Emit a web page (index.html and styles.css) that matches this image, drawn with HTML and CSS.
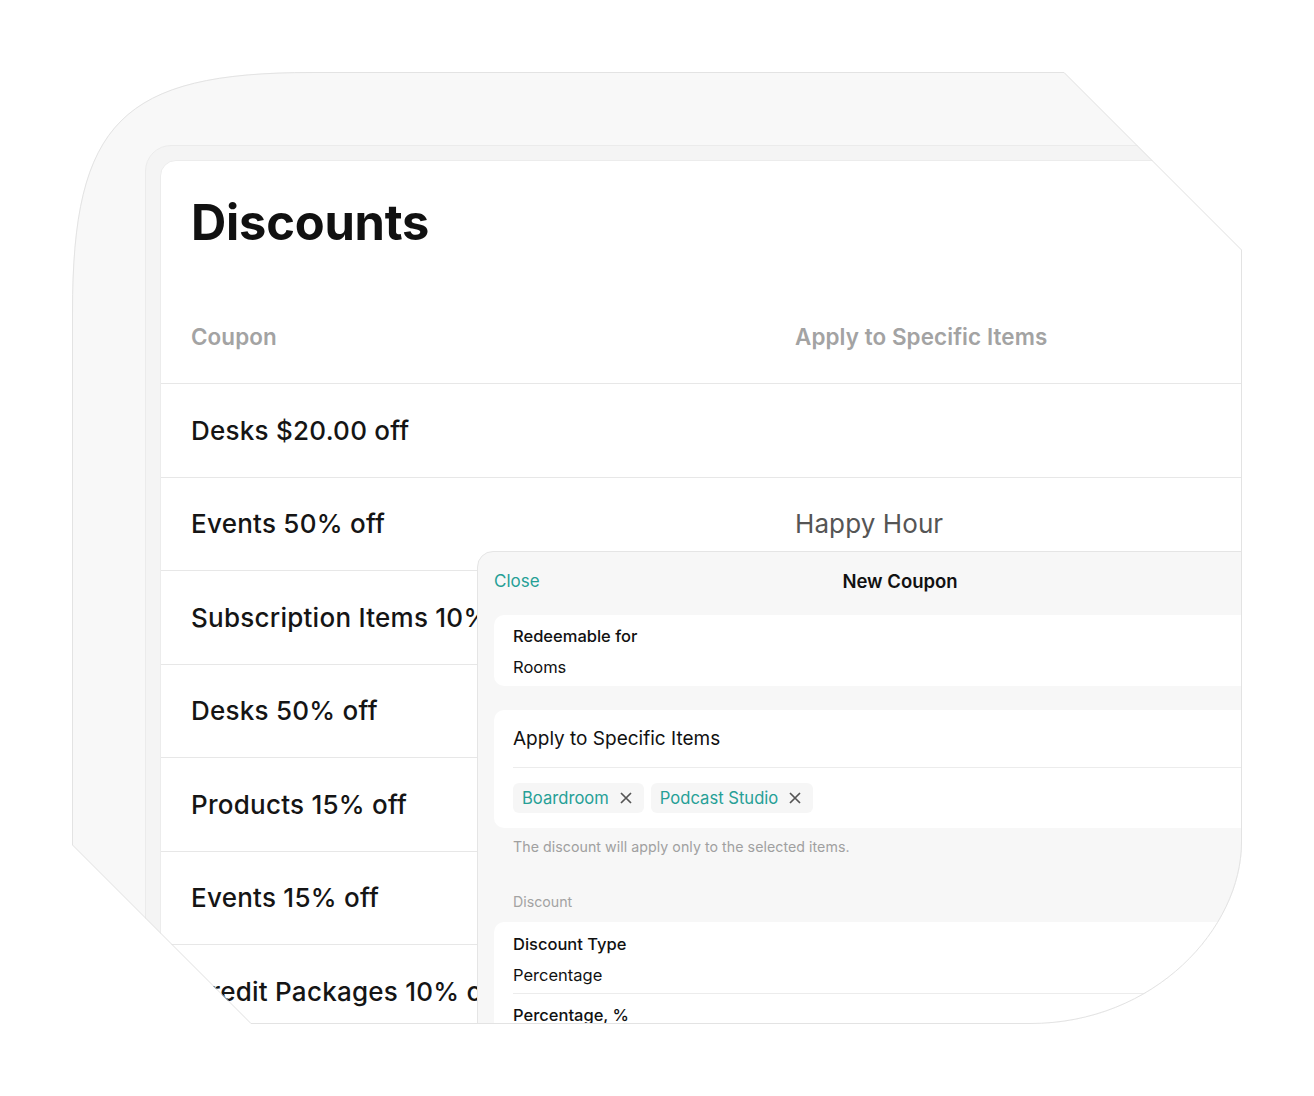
FILE: index.html
```html
<!DOCTYPE html>
<html lang="en">
<head>
<meta charset="utf-8">
<title>Discounts</title>
<link rel="stylesheet" href="styles.css">
</head>
<body>
<div class="stage">
  <div class="shape">
    <div class="device">
      <div class="screen">
        <h1 class="title">Discounts</h1>
        <div class="table">
          <div class="row head"><div class="c1">Coupon</div><div class="c2">Apply to Specific Items</div></div>
          <div class="row"><div class="c1">Desks $20.00 off</div><div class="c2"></div></div>
          <div class="row"><div class="c1">Events 50% off</div><div class="c2 muted">Happy Hour</div></div>
          <div class="row"><div class="c1">Subscription Items 10% off</div><div class="c2"></div></div>
          <div class="row"><div class="c1">Desks 50% off</div><div class="c2"></div></div>
          <div class="row"><div class="c1">Products 15% off</div><div class="c2"></div></div>
          <div class="row"><div class="c1">Events 15% off</div><div class="c2"></div></div>
          <div class="row"><div class="c1">Credit Packages 10% off</div><div class="c2"></div></div>
        </div>

        <div class="modal">
          <div class="modal-head">
            <span class="close">Close</span>
            <span class="modal-title">New Coupon</span>
            <span></span>
          </div>

          <div class="card">
            <div class="label">Redeemable for</div>
            <div class="value">Rooms</div>
          </div>

          <div class="card card-items">
            <div class="items-title">Apply to Specific Items</div>
            <div class="chips">
              <span class="chip">Boardroom
                <svg class="x" viewBox="0 0 12 12" width="12" height="12"><path d="M1 1L11 11M11 1L1 11"/></svg>
              </span>
              <span class="chip">Podcast Studio
                <svg class="x" viewBox="0 0 12 12" width="12" height="12"><path d="M1 1L11 11M11 1L1 11"/></svg>
              </span>
            </div>
          </div>
          <div class="hint">The discount will apply only to the selected items.</div>

          <div class="section">Discount</div>
          <div class="card card-discount">
            <div class="field">
              <div class="label">Discount Type</div>
              <div class="value">Percentage</div>
            </div>
            <div class="field field-2">
              <div class="label">Percentage, %</div>
            </div>
          </div>
        </div>
      </div>
    </div>
  </div>
  <svg class="outline" width="1170" height="952" viewBox="0 0 1170 952">
    <path d="M0.5,240 C0.5,50 50,0.5 240,0.5 L992,0.5 L1169.5,178 L1169.5,770 C1169.5,856 1083,951.5 958,951.5 L179,951.5 L0.5,773 Z"/>
  </svg>
</div>
</body>
</html>
```
FILE: styles.css
```css
* { box-sizing: border-box; }

html, body {
  margin: 0;
  padding: 0;
  background: #ffffff;
  font-family: Inter, "Noto Sans", "Liberation Sans", sans-serif;
  color: #111111;
}

.stage {
  position: relative;
  width: 1170px;
  height: 952px;
  margin: 72px 0 0 72px;
}

.shape {
  width: 1170px;
  height: 952px;
  overflow: hidden;
  background: #f8f8f8;
  padding: 73px 0 0 73px;
  clip-path: path("M0,240 C0,50 50,0 240,0 L992,0 L1170,178 L1170,770 C1170,856 1083,952 958,952 L179,952 L0,773 Z");
}

.outline {
  position: absolute;
  left: 0;
  top: 0;
  pointer-events: none;
  overflow: visible;
}
.outline path {
  fill: none;
  stroke: #e3e3e3;
  stroke-width: 1;
}

.device {
  width: 1300px;
  height: 1000px;
  background: #f4f4f4;
  border: 1px solid #ebebeb;
  border-radius: 26px;
  padding: 14px;
}

.screen {
  position: relative;
  height: 100%;
  background: #ffffff;
  border: 1px solid #ececec;
  border-radius: 16px;
  overflow: hidden;
}

.title {
  margin: 0;
  padding: 32px 0 0 30px;
  font-size: 48.8px;
  line-height: 60px;
  font-weight: 700;
  color: #111;
  letter-spacing: -0.2px;
}

.table {
  margin-top: 37px;
}

.row {
  display: flex;
  align-items: center;
  height: 93.5px;
  padding-left: 30px;
  border-bottom: 1px solid #e7e7e7;
  font-size: 26px;
  font-weight: 500;
  color: #151515;
  white-space: nowrap;
  letter-spacing: 0.25px;
}

.row.head {
  height: 94px;
  font-size: 22.4px;
  font-weight: 600;
  color: #a3a3a3;
  letter-spacing: 0.1px;
}

.c1 { width: 604px; flex: none; }
.c2 { flex: 1; }
.c2.muted { color: #555555; font-weight: 400; letter-spacing: 0.1px; }

.modal {
  position: absolute;
  left: 316px;
  top: 390px;
  width: 846px;
  height: 620px;
  background: #f7f7f7;
  border: 1px solid #e5e5e5;
  border-radius: 16px 16px 0 0;
  padding: 0 16px;
}

.modal-head {
  display: grid;
  grid-template-columns: 1fr auto 1fr;
  align-items: center;
  height: 57px;
  font-size: 17px;
}

.close { color: #26a096; }
.modal-title { font-weight: 600; color: #111; font-size: 18.5px; }

.card {
  background: #ffffff;
  border-radius: 10px;
  margin-top: 6px;
  padding: 11px 19px 9px;
}

.label, .value {
  font-size: 16.5px;
  line-height: 20px;
  color: #111;
}
.label { font-weight: 500; }
.value { margin-top: 11px; font-weight: 400; }

.card-items {
  margin-top: 24px;
  padding: 0;
}

.items-title {
  margin-left: 19px;
  padding: 17px 0 16px;
  font-size: 19px;
  line-height: 24px;
  border-bottom: 1px solid #ececec;
}

.chips {
  display: flex;
  gap: 7px;
  padding: 15px 19px;
}

.chip {
  display: inline-flex;
  align-items: center;
  gap: 11px;
  height: 30px;
  padding: 0 12px 0 9px;
  background: #f6f6f6;
  border-radius: 6px;
  color: #26a096;
  font-size: 16.6px;
}

.x path {
  stroke: #555;
  stroke-width: 1.7;
  fill: none;
}

.hint {
  margin-top: 9px;
  padding-left: 19px;
  font-size: 14.2px;
  line-height: 20px;
  color: #a0a0a0;
  letter-spacing: 0.05px;
}

.section {
  margin-top: 35px;
  padding-left: 19px;
  font-size: 14.2px;
  line-height: 20px;
  color: #a3a3a3;
}

.card-discount {
  margin-top: 10px;
  padding: 0 0 0 19px;
}

.field {
  padding: 12px 0 8px;
  border-bottom: 1px solid #ececec;
}

.field-2 {
  padding-top: 11px;
  border-bottom: none;
}
```
